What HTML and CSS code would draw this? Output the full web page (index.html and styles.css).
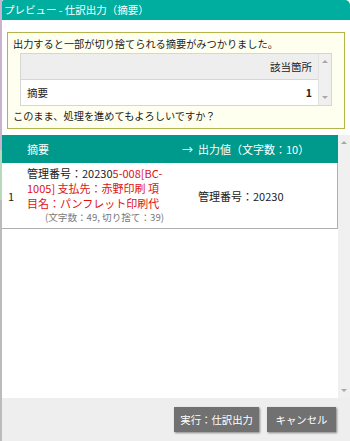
FILE: index.html
```html
<!DOCTYPE html>
<html lang="ja">
<head>
  <meta charset="UTF-8" />
  <title>プレビュー - 仕訳出力（摘要）</title>
  <link rel="stylesheet" href="styles.css">
</head>
<body>
  <div class="dialog">
    <div class="titlebar">プレビュー - 仕訳出力（摘要）</div>

    <div class="warning">
      <p class="msg">出力すると一部が切り捨てられる摘要がみつかりました。</p>
      <div class="mini-grid">
        <table class="mini-table">
          <tr class="mini-head">
            <th class="mini-name"></th>
            <th class="mini-count">該当箇所</th>
          </tr>
          <tr>
            <td class="mini-name">摘要</td>
            <td class="mini-count">1</td>
          </tr>
        </table>
        <div class="scroll scroll-mini">
          <span class="arrow up"></span>
          <span class="arrow down"></span>
        </div>
      </div>
      <p class="msg">このまま、処理を進めてもよろしいですか？</p>
    </div>

    <div class="grid">
      <div class="grid-body">
        <table class="grid-table">
          <tr class="grid-head">
            <th class="col-no"></th>
            <th class="col-src">摘要</th>
            <th class="col-arrow">→</th>
            <th class="col-out">出力値（文字数：10）</th>
          </tr>
          <tr class="grid-row">
            <td class="col-no">1</td>
            <td class="col-src">
              <div class="src-text">管理番号：20230<span class="cut">5-008[BC-1005] 支払先：赤野印刷 項目名：パンフレット印刷代</span></div>
              <div class="src-count">(文字数：49, 切り捨て：39)</div>
            </td>
            <td class="col-arrow"></td>
            <td class="col-out">管理番号：20230</td>
          </tr>
        </table>
      </div>
      <div class="scroll scroll-main">
        <span class="arrow up"></span>
        <span class="arrow down"></span>
      </div>
    </div>

    <div class="footer">
      <button class="btn">実行：仕訳出力</button>
      <button class="btn">キャンセル</button>
    </div>
  </div>
</body>
</html>
```

FILE: styles.css
```css
body {
  margin: 0;
  font-family: "Noto Sans CJK JP", "Noto Sans", sans-serif;
  font-size: 11px;
  color: #222;
  background: linear-gradient(180deg, #c9b3cf 0, #c9b3cf 150px, #b7d8bd 150px, #b7d8bd 200px, #bbbbbb 200px);
}

.dialog {
  margin-left: 2px;
  height: 441px;
  display: flex;
  flex-direction: column;
  background: #fff;
}

.titlebar {
  height: 20px;
  line-height: 20px;
  padding-left: 2px;
  background: #00ae9f;
  color: #fff;
  font-size: 10.5px;
  border-top-left-radius: 2px;
  border-top-right-radius: 5px;
}

/* 警告ボックス */
.warning {
  margin: 12px 5px 0 5px;
  padding: 3px 5px 4px 5px;
  border: 1px solid #b4b44c;
  background: #fffff0;
}
.msg {
  margin: 0;
  font-size: 10.2px;
  line-height: 16px;
}
.mini-grid {
  display: flex;
  margin: 1px 7px 2px 7px;
  border: 1px solid #d6d6d6;
  background: #fff;
}
.mini-table {
  flex: 1;
  border-collapse: collapse;
}
.mini-table th,
.mini-table td {
  height: 25px;
  padding: 0 6px;
  font-size: 10.5px;
}
.mini-head th {
  background: #eeeeee;
  border-bottom: 1px solid #d6d6d6;
  font-weight: normal;
}
.mini-name {
  text-align: left;
}
.mini-count {
  text-align: right;
  font-weight: bold;
}
.mini-head .mini-count {
  font-weight: normal;
}

/* スクロールバー */
.scroll {
  position: relative;
  width: 12px;
  background: #f0f0f0;
  border-left: 1px solid #e2e2e2;
}
.arrow {
  position: absolute;
  left: 3px;
  width: 0;
  height: 0;
  border-left: 3px solid transparent;
  border-right: 3px solid transparent;
}
.arrow.up {
  top: 6px;
  border-bottom: 3px solid #a8a8a8;
}
.arrow.down {
  bottom: 6px;
  border-top: 3px solid #a8a8a8;
}

/* メイングリッド */
.grid {
  flex: 1;
  display: flex;
  margin-top: 6px;
}
.grid-body {
  flex: 1;
}
.grid-table {
  width: 100%;
  border-collapse: collapse;
  table-layout: fixed;
}
.grid-head th {
  height: 28px;
  background: #009a8c;
  color: #fff;
  font-weight: normal;
  text-align: left;
  font-size: 11px;
}
.grid-row td {
  border-bottom: 1px solid #b0b0b0;
  vertical-align: middle;
  font-size: 11px;
}
.grid-row .col-out {
  border-right: 1px solid #b0b0b0;
}
.col-no {
  width: 13px;
  padding: 0 0 0 6px;
}
.col-src {
  width: 140px;
  padding: 3px 6px 5px 6px;
}
.grid-head .col-src {
  padding: 0 6px;
}
.col-arrow {
  width: 13px;
  padding: 0 0 0 9px;
}
.col-out {
  padding: 0 0 0 3px;
}
.src-text {
  line-height: 15px;
}
.cut {
  color: #e01010;
}
.src-count {
  padding-left: 18px;
  font-size: 9.6px;
  line-height: 12px;
  white-space: nowrap;
  color: #777;
}
.scroll-main {
  border-left: none;
}

/* フッター */
.footer {
  height: 43px;
  display: flex;
  justify-content: flex-end;
  align-items: center;
  gap: 8px;
  padding-right: 14px;
  background: #eeeeee;
}
.btn {
  height: 25px;
  min-width: 69px;
  padding: 0 6px;
  border: none;
  background: #717171;
  color: #fff;
  font-family: inherit;
  font-size: 10.4px;
  box-shadow: 1px 1px 2px rgba(0, 0, 0, 0.45);
}
```
